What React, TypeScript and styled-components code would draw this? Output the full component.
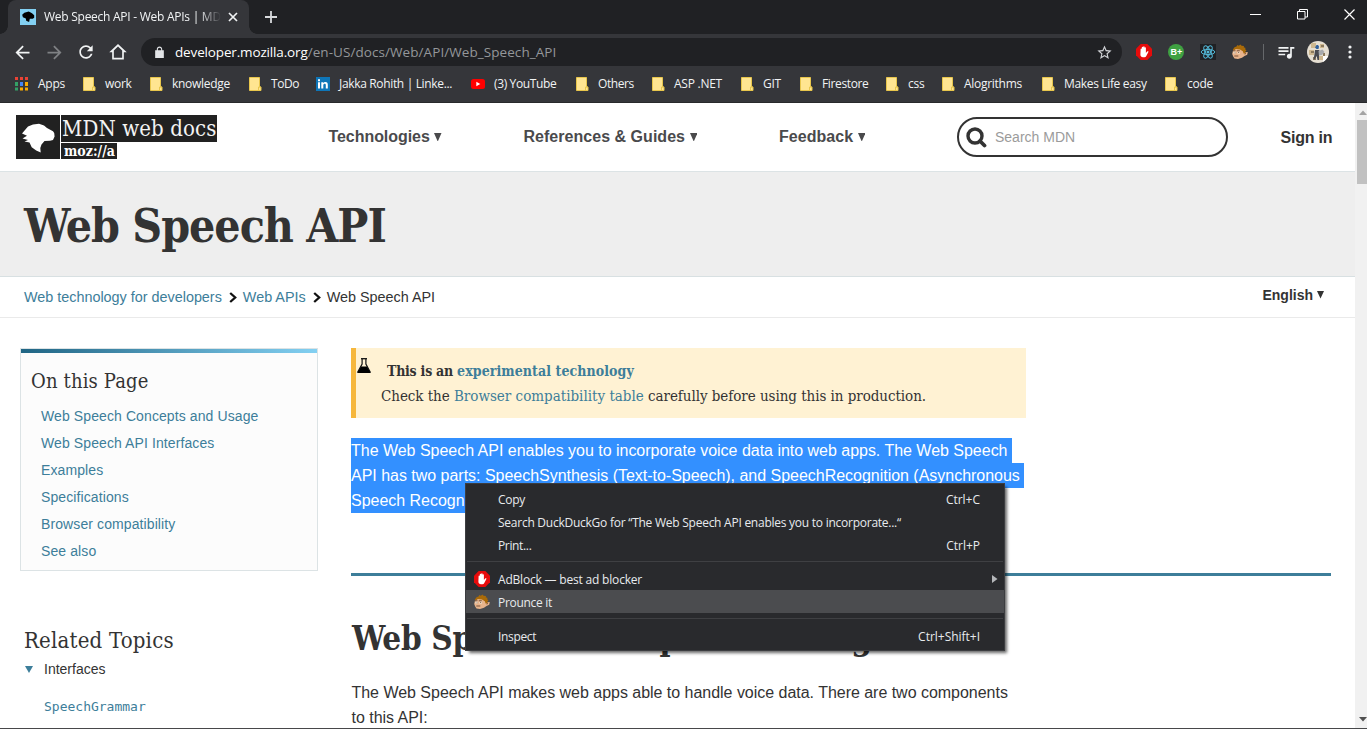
import React from 'react';
import styled, { createGlobalStyle } from 'styled-components';

const ui = '"Open Sans", "Noto Sans", sans-serif';
const sans = '"Liberation Sans", Arial, sans-serif';
const slab = '"DejaVu Serif Condensed", "DejaVu Serif", serif';
const link = '#3d7e9a';

const GlobalStyle = createGlobalStyle`
  * { box-sizing: border-box; }
  body { margin: 0; overflow: hidden; background: #fff; }
  h1, h2, h3, p, ul { margin: 0; padding: 0; font-weight: normal; }
  ul { list-style: none; }
  svg { display: block; flex: none; }
`;

/* ---------- browser window ---------- */

const Window = styled.div`
  position: relative;
  display: flex;
  flex-direction: column;
  width: 1367px;
  height: 729px;
  overflow: hidden;
  border-bottom: 1px solid #47484a;
`;

const TabStrip = styled.div`
  display: flex;
  flex: none;
  height: 34px;
  padding-left: 8px;
  background: #202124;
`;

const Tab = styled.div`
  position: relative;
  display: flex;
  align-items: center;
  width: 241px;
  padding-left: 12px;
  border-radius: 8px 8px 0 0;
  background: #35363a;
  &::before, &::after {
    content: '';
    position: absolute;
    bottom: 0;
    width: 8px;
    height: 8px;
  }
  &::before { left: -8px; background: radial-gradient(circle at 0 0, transparent 7.5px, #35363a 8px); }
  &::after { right: -8px; background: radial-gradient(circle at 100% 0, transparent 7.5px, #35363a 8px); }
`;

const TabTitle = styled.span`
  width: 178px;
  margin: 0 5px 1px 8px;
  overflow: hidden;
  white-space: nowrap;
  font: 12px/18px ${ui};
  letter-spacing: -0.26px;
  color: #f1f3f4;
  mask-image: linear-gradient(to right, #000 155px, transparent 177px);
`;

const NewTab = styled.div`
  display: flex;
  align-items: center;
  justify-content: center;
  width: 44px;
`;

const WindowButtons = styled.div`
  display: flex;
  gap: 36px;
  margin: 9px 12px 0 auto;
`;

const Toolbar = styled.div`
  display: flex;
  flex: none;
  align-items: center;
  height: 36px;
  padding-left: 6px;
  background: #35363a;
`;

const ToolCell = styled.div<{ $w?: number }>`
  display: flex;
  flex: none;
  align-items: center;
  justify-content: center;
  width: ${p => p.$w ?? 32}px;
`;

const Omnibox = styled.div`
  display: flex;
  align-items: center;
  width: 981px;
  height: 28px;
  margin: 0 6px 0 7px;
  padding: 0 9px 0 12px;
  border-radius: 14px;
  background: #202124;
`;

const Url = styled.div`
  flex: 1;
  margin-left: 9px;
  white-space: nowrap;
  font: 13.5px/20px ${ui};
  letter-spacing: 0.07px;
  color: #94979a;
`;

const Host = styled.span`
  letter-spacing: -0.15px;
  color: #fff;
`;

const ToolDivider = styled.i`
  width: 1px;
  height: 16px;
  background: #66686b;
`;

const Bookmarks = styled.div`
  display: flex;
  flex: none;
  height: 33px;
  padding: 0 0 5px 15px;
  background: #35363a;
  border-bottom: 1px solid #28292b;
`;

const Bookmark = styled.div<{ $w: number; $ls: number }>`
  display: flex;
  flex: none;
  align-items: center;
  width: ${p => p.$w}px;
  white-space: nowrap;
  font: 12px/18px ${ui};
  letter-spacing: ${p => p.$ls}px;
  color: #f1f3f4;
`;

const BookmarkIcon = styled.span<{ $w: number }>`
  display: flex;
  flex: none;
  width: ${p => p.$w}px;
`;

const Viewport = styled.div`
  display: flex;
  flex: 1;
  min-height: 0;
  overflow: hidden;
`;

const Scrollbar = styled.div`
  display: flex;
  flex-direction: column;
  justify-content: space-between;
  width: 12px;
  padding: 7px 0 6px 2px;
  background: #f1f1f1;
`;

const Thumb = styled.div`
  height: 64px;
  margin: 5px 0 auto;
  background: #c1c1c1;
`;

/* ---------- MDN page ---------- */

const Page = styled.div`
  width: 1355px;
  overflow: hidden;
  background: #fff;
  font-family: ${sans};
  color: #333;
`;

const Header = styled.header`
  display: flex;
  align-items: center;
  height: 69px;
  padding-left: 16px;
  border-bottom: 1px solid #dce3e5;
`;

const Logo = styled.div`
  display: flex;
  gap: 1px;
  width: 312.5px;
  height: 44px;
`;

const LogoMark = styled.div`
  width: 44px;
  height: 44px;
  background: #212121;
`;

const LogoWords = styled.div`
  display: flex;
  flex-direction: column;
  align-items: flex-start;
  gap: 1px;
`;

const LogoName = styled.div`
  width: 156px;
  height: 27px;
  padding-left: 1px;
  background: #212121;
  font: 22px/28px ${slab};
  letter-spacing: 0.12px;
  white-space: nowrap;
  color: #f4f4f4;
`;

const LogoMoz = styled.div`
  width: 56px;
  height: 16px;
  padding-left: 3px;
  background: #212121;
  font: bold 14px/16px ${slab};
  white-space: nowrap;
  color: #fff;
`;

const NavItem = styled.div<{ $w: number; $ls: number }>`
  display: flex;
  align-items: center;
  gap: 4.5px;
  width: ${p => p.$w}px;
  white-space: nowrap;
  font: bold 16px/20px ${sans};
  letter-spacing: ${p => p.$ls}px;
  color: #4a4a4c;
`;

const SearchBox = styled.div`
  display: flex;
  align-items: center;
  gap: 8px;
  width: 271px;
  height: 40px;
  padding-left: 7px;
  border: 2px solid #333;
  border-radius: 20px;
  font-size: 14px;
  color: #9b9b9b;
`;

const SignIn = styled.div`
  margin: 1px 0 0 52.5px;
  font: bold 16px/20px ${sans};
  letter-spacing: -0.2px;
`;

const TitleBand = styled.div`
  height: 105px;
  padding: 25px 0 0 24px;
  background: #eee;
  border-bottom: 1px solid #d8e0e2;
`;

const Title = styled.h1`
  font: bold 46px/58px ${slab};
  letter-spacing: -1.03px;
`;

const CrumbBar = styled.div`
  display: flex;
  align-items: center;
  height: 41px;
  padding: 0 31px 0 24px;
  border-bottom: 1px solid #eaeaea;
  font-size: 14.4px;
`;

const Crumb = styled.span<{ $link?: boolean }>`
  letter-spacing: -0.01px;
  color: ${p => (p.$link ? link : '#333')};
`;

const CrumbArrow = styled.span`
  padding: 0 6px 0 7px;
`;

const Language = styled.div`
  display: flex;
  align-items: center;
  gap: 4px;
  margin: -4px 0 0 auto;
  font: bold 14px/18px ${sans};
`;

const Columns = styled.div`
  display: grid;
  grid-template-columns: 298px 980px;
  column-gap: 33px;
  padding: 30px 0 0 20px;
`;

const Toc = styled.section`
  height: 223px;
  border: 1px solid #dce3e5;
  background: #fcfcfc;
  &::before {
    content: '';
    display: block;
    height: 4px;
    background: linear-gradient(to right, #206584, #83d0f2);
  }
`;

const TocTitle = styled.h3`
  margin: 14px 0 8px 10px;
  font: 20px/28px ${slab};
  letter-spacing: 0.15px;
`;

const TocLink = styled.li`
  padding-left: 20px;
  font-size: 14px;
  line-height: 27px;
  letter-spacing: 0.1px;
  color: ${link};
`;

const RelatedTitle = styled.h3`
  margin: 56px 0 4px 4px;
  font: 22px/28px ${slab};
  letter-spacing: 0.2px;
`;

const Disclosure = styled.div`
  display: flex;
  align-items: center;
  gap: 11px;
  padding-left: 5px;
  font-size: 14px;
  line-height: 20px;
`;

const CodeLink = styled.div`
  margin: 18px 0 0 24px;
  font: 13px/20px "DejaVu Sans Mono", monospace;
  color: ${link};
`;

const Note = styled.div`
  display: flex;
  width: 675px;
  height: 70px;
  padding-top: 10px;
  border-left: 5px solid #f6b73c;
  background: #fff2d3;
`;

const NoteText = styled.div`
  margin: 1px 0 0 10px;
  white-space: nowrap;
  font: 15px/25px ${slab};
  letter-spacing: -0.05px;
`;

const NoteHead = styled.div`
  padding-left: 6px;
  font-size: 14px;
  font-weight: bold;
  letter-spacing: -0.24px;
`;

const A = styled.span<{ $ls?: number }>`
  letter-spacing: ${p => p.$ls ?? 0}px;
  color: ${link};
`;

const Intro = styled.p`
  margin-top: 20px;
  font-size: 16px;
  line-height: 25px;
  letter-spacing: -0.02px;
  white-space: nowrap;
  color: #fff;
`;

const Selected = styled.span<{ $w: number }>`
  display: block;
  width: ${p => p.$w}px;
  background: #3390ff;
`;

const Section = styled.section`
  margin-top: 60px;
  padding-top: 43px;
  border-top: 3px solid ${link};
`;

const SectionTitle = styled.h2`
  padding-left: 1px;
  font: bold 33px/40px ${slab};
  letter-spacing: -0.32px;
`;

const Body = styled.p`
  width: 670px;
  margin-top: 21px;
  padding-left: 0.5px;
  font-size: 16px;
  line-height: 25px;
  letter-spacing: -0.025px;
`;

/* ---------- context menu ---------- */

const Menu = styled.div`
  position: absolute;
  left: 465px;
  top: 483px;
  width: 540px;
  height: 168px;
  padding-top: 3px;
  border: 1px solid #3c3d40;
  background: #292a2d;
  box-shadow: 3px 3px 3px -1px rgba(0, 0, 0, 0.6);
`;

const MenuRow = styled.div<{ $active?: boolean }>`
  display: flex;
  align-items: center;
  height: 23px;
  padding: 0 24px 0 8px;
  background: ${p => (p.$active ? '#4b4c4f' : 'transparent')};
  font: 12px/21px ${ui};
  color: #e8eaed;
`;

const MenuIcon = styled.span`
  width: 24px;
`;

const MenuLabel = styled.span<{ $ls?: number }>`
  flex: 1;
  padding-top: 2px;
  white-space: nowrap;
  letter-spacing: ${p => p.$ls ?? -0.25}px;
`;

const Shortcut = styled.span`
  padding-top: 2px;
  letter-spacing: -0.02px;
`;

const SubArrow = styled.span`
  margin-right: -18px;
`;

const MenuSeparator = styled.div`
  height: 1px;
  margin: 5px 1px;
  background: #3f4043;
`;

/* ---------- drawings ---------- */

const Dog = ({ size, fill }: { size: number; fill: string }) => (
  <svg width={size} height={size} viewBox="0 0 44 44">
    <path fill={fill} d="M6 18.500 9 15l3-3.500L17 9.500l6-.7 5 1.700 3 2.500 6 3.200 1.200 1.800.4 3.500-1.600 3.400-3 .9-5.500.3-3 3.400-1.200 3.600.4 4.300-4.500-1.800-4.500-3.400-2.200-4.700-5-.9 3.500-1.700-5.500-1.400L11 20.700z" />
  </svg>
);

const Glyph = ({ d, size = 21, fill = '#f1f3f4' }: { d: string; size?: number; fill?: string }) => (
  <svg width={size} height={size} viewBox="0 0 24 24" fill={fill} fillRule="evenodd"><path d={d} /></svg>
);

const Folder = () => (
  <svg width="13" height="14" viewBox="0 0 13 14">
    <path d="M.5.500h10v9.500h1.500v3.500H.5z" fill="#ffe591" stroke="#e8c64c" />
    <path d="M9.500 13.500v-3.500h2.500" fill="none" stroke="#e8c64c" />
  </svg>
);

const AppsGrid = () => (
  <svg width="13" height="14" viewBox="0 0 13 14">
    <path fill="#ea4335" d="M0 0h3v3H0zM5 0h3v3H5zM10 0h3v3h-3z" />
    <path fill="#34a066" d="M0 5h3v4H0zM0 10.500h3v3H0z" />
    <path fill="#4285f4" d="M5 5h3v4H5z" />
    <path fill="#f9ab00" d="M10 5h3v4h-3zM5 10.500h3v3H5zM10 10.500h3v3h-3z" />
  </svg>
);

const LinkedIn = () => (
  <svg width="14" height="14" viewBox="0 0 14 14">
    <path fill="#0e76b8" d="M0 0h14v14H0z" />
    <path fill="#fff" d="M2 5.300h2v6.200H2zM2 2.300h2v2H2zM5.300 5.300h1.900v.9c.4-.7 1.100-1.100 2.100-1.100 2 0 2.500 1.200 2.500 3v3.400H9.800V8.400c0-.9-.1-1.600-1.100-1.600s-1.400.7-1.400 1.600v3.100h-2z" />
  </svg>
);

const YouTube = () => (
  <svg width="14" height="12" viewBox="0 0 14 12">
    <rect y="1" width="14" height="10" rx="2.500" fill="#f00" />
    <path fill="#fff" d="M5.300 3.800v4.400L9.300 6z" />
  </svg>
);

const AdBlock = () => (
  <svg width="16" height="16" viewBox="0 0 16 16">
    <path fill="#e60b0b" d="M4.700 0h6.600L16 4.700v6.600L11.300 16H4.700L0 11.300V4.700z" />
    <path fill="#fff" d="M4.600 5.200c0-.9 1.200-.9 1.200 0V3.400c0-.9 1.400-.9 1.400 0V2.900c0-.9 1.400-.9 1.400 0v.9c0-.9 1.300-.9 1.300 0v5.300l1.200-1.500c.6-.6 1.700-.2 1.300.5l-2.100 4c-.4.8-1 1.200-1.900 1.200H7c-1.600 0-2.600-1-2.600-2.500z" />
  </svg>
);

const BPlus = () => (
  <svg width="16" height="16" viewBox="0 0 16 16">
    <circle cx="8" cy="8" r="8" fill="#3fa142" />
    <text x="2.400" y="11.200" fontFamily="Liberation Sans, sans-serif" fontSize="9" fontWeight="bold" fill="#fff">B+</text>
  </svg>
);

const ReactLogo = () => (
  <svg width="16" height="16" viewBox="0 0 16 16">
    <path fill="#202124" d="M0 0h16v16H0z" />
    <g fill="none" stroke="#53b9d8" strokeWidth="1">
      <ellipse cx="8" cy="8" rx="6.800" ry="2.600" />
      <ellipse cx="8" cy="8" rx="6.800" ry="2.600" transform="rotate(60 8 8)" />
      <ellipse cx="8" cy="8" rx="6.800" ry="2.600" transform="rotate(120 8 8)" />
    </g>
    <circle cx="8" cy="8" r="1.500" fill="#53b9d8" />
  </svg>
);

const Boy = () => (
  <svg width="16" height="16" viewBox="0 0 16 16">
    <path fill="#e8b48c" d="M1 6.500 3 5h8l1 3.500 3.800-.5-.6 2.800-2.700 1.200L10 13.800 6 15l-3.500-.6L1.200 12.500.2 10z" />
    <path fill="#a96a08" d="M.8 5.500 3 2.800l1 .3L5.500 1l1.300.7L8.500.5l1 1.200 2.500.3-.3 1.300 2 .8-.7 1 1.500 1.400-1.200 1 .4 1.300-1.900.9-1-2.400L8 5.500 4 5 1.500 6.500z" />
    <path fill="#f4ead9" d="M1.500 7.500h2.200v2H1.500zM5.500 7.500h2.400v2H5.500z" />
    <path stroke="#6d4630" strokeWidth=".9" fill="none" d="M1 6.800h2.500M4.800 6.800h3M3 8.500v.8M6.200 8.500h1M2.300 12h4M12.500 10l1.500-.5" />
  </svg>
);

const Avatar = () => (
  <svg width="22" height="22" viewBox="0 0 22 22">
    <defs><clipPath id="face"><circle cx="11" cy="11" r="11" /></clipPath></defs>
    <g clipPath="url(#face)">
      <path fill="#e6dfd2" d="M0 0h22v22H0z" />
      <path fill="#cdb78f" d="M4 2h5v5H4zM2 9h5v5H2zM13 3h4v4h-4zM12 15h6v4h-6z" />
      <path fill="#8c7a5e" d="M4 10h3v2H4zM14 4h3v2h-3zM6 16h3v3H6zM16 12h2v4h-2z" />
      <path fill="#2f5f9c" d="M9.500 4h1.500l1 1.500-.5 2.500H9.500L8 6.500z" />
      <path fill="#4a4b50" d="M8 9h4l2 3-2 2v5h-1.500l-.8-4-2.200 3.500H6.500l1-5.500z" />
      <path fill="#a9abae" d="M11.500 10l4-1.500 2 2.500-2.500 3-3 .5z" />
      <path fill="#fff" d="M16 15h6v7h-6zM0 0h5L1 6z" />
    </g>
  </svg>
);

const DownTriangle = ({ w, h, fill }: { w: number; h: number; fill: string }) => (
  <svg width={w} height={h} viewBox="0 0 10 10" preserveAspectRatio="none"><path fill={fill} d="M0 0h10L5 10z" /></svg>
);

const Chevron = () => (
  <svg width="8" height="11" viewBox="0 0 8 11"><path d="M1.200 1l5 4.500-5 4.500" fill="none" stroke="#111" strokeWidth="2.300" /></svg>
);

const Flask = () => (
  <svg width="15" height="16" viewBox="0 0 15 16">
    <path d="M5 .700h6" stroke="#111" strokeWidth="1.300" />
    <path d="M6.100 1v5L1.800 14h12.400L9.900 6V1" fill="none" stroke="#111" strokeWidth="1.200" />
    <path d="M5.100 8.500h5.800l3.800 6.500H1.300z" />
  </svg>
);

const Magnifier = () => (
  <svg width="21" height="21" viewBox="0 0 21 21" fill="none" stroke="#333">
    <circle cx="9" cy="9" r="7" strokeWidth="3.400" />
    <path d="M14 14l4.500 4.500" strokeWidth="3.800" strokeLinecap="round" />
  </svg>
);

const bookmarks: [string, number, number, React.ReactNode, number][] = [
  ['Apps', 68, -0.25, <AppsGrid />, 23],
  ['work', 67, -0.28, <Folder />, 22],
  ['knowledge', 99, -0.28, <Folder />, 22],
  ['ToDo', 67, -0.4, <Folder />, 22],
  ['Jakka Rohith | Linke...', 155, -0.34, <LinkedIn />, 23],
  ['(3) YouTube', 105, -0.36, <YouTube />, 23],
  ['Others', 76, -0.4, <Folder />, 22],
  ['ASP .NET', 89, -0.25, <Folder />, 22],
  ['GIT', 59, -0.28, <Folder />, 22],
  ['Firestore', 86, -0.36, <Folder />, 22],
  ['css', 56, -0.2, <Folder />, 22],
  ['Alogrithms', 100, -0.28, <Folder />, 22],
  ['Makes Life easy', 123, -0.34, <Folder />, 22],
  ['code', 60, -0.28, <Folder />, 22],
];

const tocLinks = ['Web Speech Concepts and Usage', 'Web Speech API Interfaces', 'Examples', 'Specifications', 'Browser compatibility', 'See also'];

const backArrow = 'M20 11H7.830l5.590-5.590L12 4l-8 8 8 8 1.410-1.410L7.830 13H20v-2z';
const forwardArrow = 'M12 4l-1.410 1.410L16.170 11H4v2h12.170l-5.580 5.590L12 20l8-8z';
const reload = 'M17.650 6.350C16.200 4.900 14.210 4 12 4c-4.420 0-7.990 3.580-7.990 8s3.570 8 7.990 8c3.730 0 6.840-2.550 7.730-6h-2.080c-.82 2.330-3.040 4-5.650 4-3.310 0-6-2.690-6-6s2.690-6 6-6c1.660 0 3.140.69 4.220 1.780L13 11h7V4l-2.350 2.350z';
const home = 'M12 2.500 1.500 12.300H5V21h14v-8.700h3.500zM12 5.400l5 4.700V19H7v-8.900z';
const lock = 'M18 8h-1V6c0-2.760-2.240-5-5-5S7 3.240 7 6v2H4v14h16V8zM9 8V6c0-1.660 1.340-3 3-3s3 1.340 3 3v2z';
const star = 'M22 9.240l-7.190-.62L12 2 9.190 8.630 2 9.240l5.460 4.730L5.820 21 12 17.270 18.180 21l-1.630-7.030zM12 15.400l-3.760 2.270 1-4.280-3.320-2.880 4.380-.38L12 6.100l1.710 4.040 4.380.38-3.320 2.880 1 4.280z';
const queue = 'M15 6H3v2h12zM15 10H3v2h12zM3 16h8v-2H3zM17 6v8.180c-.31-.11-.65-.18-1-.18-1.660 0-3 1.340-3 3s1.340 3 3 3 3-1.340 3-3V8h3V6z';

export default function App() {
  return (
    <>
      <GlobalStyle />
      <Window>
        <TabStrip>
          <Tab>
            <svg width="16" height="16" viewBox="0 0 44 44">
              <path fill="#83d0f2" d="M0 0h44v44H0z" />
              <path d="M6 16l6-6 12-3 9 5 6 5v7l-4 3h-8l-2 9-8-4-1-6-8-3z" />
            </svg>
            <TabTitle>Web Speech API - Web APIs | MDN</TabTitle>
            <svg width="12" height="12" viewBox="0 0 12 12"><path d="M2 2l8 8M10 2l-8 8" stroke="#f1f3f4" strokeWidth="1.700" /></svg>
          </Tab>
          <NewTab>
            <svg width="12" height="12" viewBox="0 0 12 12"><path d="M6 0v12M0 6h12" stroke="#d8dadd" strokeWidth="1.800" /></svg>
          </NewTab>
          <WindowButtons>
            <svg width="11" height="11" viewBox="0 0 11 11"><path d="M0 5.500h11" stroke="#fff" /></svg>
            <svg width="11" height="11" viewBox="0 0 11 11" fill="none" stroke="#fff"><path d="M.5 2.500h7.500v7.500H.5zM2.500 2.500V.500h8v7.500H8" /></svg>
            <svg width="11" height="11" viewBox="0 0 11 11"><path d="M.5.500l10 10M10.500.500l-10 10" stroke="#fff" strokeWidth="1.200" /></svg>
          </WindowButtons>
        </TabStrip>

        <Toolbar>
          <ToolCell><Glyph d={backArrow} /></ToolCell>
          <ToolCell><Glyph d={forwardArrow} fill="#7f8184" /></ToolCell>
          <ToolCell><Glyph d={reload} size={20} /></ToolCell>
          <ToolCell><Glyph d={home} size={20} /></ToolCell>
          <Omnibox>
            <Glyph d={lock} size={13} fill="#e3e5e8" />
            <Url><Host>developer.mozilla.org</Host>/en-US/docs/Web/API/Web_Speech_API</Url>
            <Glyph d={star} size={17} fill="#d0d2d5" />
          </Omnibox>
          <ToolCell><AdBlock /></ToolCell>
          <ToolCell><BPlus /></ToolCell>
          <ToolCell><ReactLogo /></ToolCell>
          <ToolCell><Boy /></ToolCell>
          <ToolCell $w={14}><ToolDivider /></ToolCell>
          <ToolCell><Glyph d={queue} size={20} /></ToolCell>
          <ToolCell><Avatar /></ToolCell>
          <ToolCell>
            <svg width="4" height="14" viewBox="0 0 4 14" fill="#f1f3f4"><circle cx="2" cy="2" r="1.600" /><circle cx="2" cy="7" r="1.600" /><circle cx="2" cy="12" r="1.600" /></svg>
          </ToolCell>
        </Toolbar>

        <Bookmarks>
          {bookmarks.map(([name, w, ls, icon, iw]) => (
            <Bookmark key={name} $w={w} $ls={ls}><BookmarkIcon $w={iw}>{icon}</BookmarkIcon>{name}</Bookmark>
          ))}
        </Bookmarks>

        <Viewport>
          <Page>
            <Header>
              <Logo>
                <LogoMark><Dog size={44} fill="#fff" /></LogoMark>
                <LogoWords>
                  <LogoName>MDN web docs</LogoName>
                  <LogoMoz>moz://a</LogoMoz>
                </LogoWords>
              </Logo>
              <NavItem $w={195} $ls={-0.06}>Technologies<DownTriangle w={7.5} h={8.5} fill="#4a4a4c" /></NavItem>
              <NavItem $w={255.5} $ls={0.03}>References &amp; Guides<DownTriangle w={7.5} h={8.5} fill="#4a4a4c" /></NavItem>
              <NavItem $w={178} $ls={0.05}>Feedback<DownTriangle w={7.5} h={8.5} fill="#4a4a4c" /></NavItem>
              <SearchBox><Magnifier />Search MDN</SearchBox>
              <SignIn>Sign in</SignIn>
            </Header>

            <TitleBand><Title>Web Speech API</Title></TitleBand>

            <CrumbBar>
              <Crumb $link>Web technology for developers</Crumb>
              <CrumbArrow><Chevron /></CrumbArrow>
              <Crumb $link>Web APIs</Crumb>
              <CrumbArrow><Chevron /></CrumbArrow>
              <Crumb>Web Speech API</Crumb>
              <Language>English<DownTriangle w={7} h={7.5} fill="#333" /></Language>
            </CrumbBar>

            <Columns>
              <aside>
                <Toc>
                  <TocTitle>On this Page</TocTitle>
                  <ul>{tocLinks.map(t => <TocLink key={t}>{t}</TocLink>)}</ul>
                </Toc>
                <RelatedTitle>Related Topics</RelatedTitle>
                <Disclosure><DownTriangle w={8} h={7} fill={link} />Interfaces</Disclosure>
                <CodeLink>SpeechGrammar</CodeLink>
              </aside>
              <main>
                <Note>
                  <Flask />
                  <NoteText>
                    <NoteHead>This is an <A $ls={0.08}>experimental technology</A></NoteHead>
                    Check the <A>Browser compatibility table</A> carefully before using this in production.
                  </NoteText>
                </Note>
                <Intro>
                  <Selected $w={661}>The Web Speech API enables you to incorporate voice data into web apps. The Web Speech</Selected>
                  <Selected $w={673}>API has two parts: SpeechSynthesis (Text-to-Speech), and SpeechRecognition (Asynchronous</Selected>
                  <Selected $w={160}>Speech Recognition.)</Selected>
                </Intro>
                <Section>
                  <SectionTitle>Web Speech Concepts and Usage</SectionTitle>
                  <Body>The Web Speech API makes web apps able to handle voice data. There are two components to this API:</Body>
                </Section>
              </main>
            </Columns>
          </Page>
          <Scrollbar>
            <svg width="10" height="5" viewBox="0 0 10 5"><path fill="#a3a3a3" d="M2 5l4-4.500L10 5z" /></svg>
            <Thumb />
            <svg width="10" height="5" viewBox="0 0 10 5"><path fill="#505050" d="M2 0h8L6 4.500z" /></svg>
          </Scrollbar>
        </Viewport>

        <Menu>
          <MenuRow><MenuIcon /><MenuLabel>Copy</MenuLabel><Shortcut>Ctrl+C</Shortcut></MenuRow>
          <MenuRow><MenuIcon /><MenuLabel>Search DuckDuckGo for “The Web Speech API enables you to incorporate...“</MenuLabel></MenuRow>
          <MenuRow><MenuIcon /><MenuLabel $ls={-0.35}>Print...</MenuLabel><Shortcut>Ctrl+P</Shortcut></MenuRow>
          <MenuSeparator />
          <MenuRow>
            <MenuIcon><AdBlock /></MenuIcon><MenuLabel $ls={-0.19}>AdBlock — best ad blocker</MenuLabel>
            <SubArrow><svg width="6" height="8" viewBox="0 0 6 8"><path fill="#b4b6b9" d="M0 0l5.500 4L0 8z" /></svg></SubArrow>
          </MenuRow>
          <MenuRow $active><MenuIcon><Boy /></MenuIcon><MenuLabel $ls={-0.3}>Prounce it</MenuLabel></MenuRow>
          <MenuSeparator />
          <MenuRow><MenuIcon /><MenuLabel $ls={-0.33}>Inspect</MenuLabel><Shortcut>Ctrl+Shift+I</Shortcut></MenuRow>
        </Menu>
      </Window>
    </>
  );
}
